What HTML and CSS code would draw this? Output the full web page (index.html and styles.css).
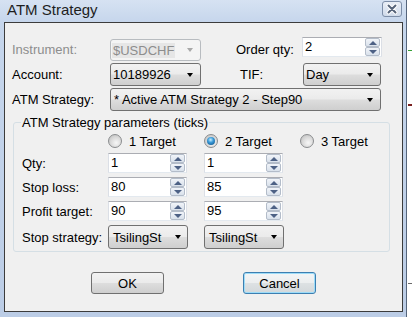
FILE: index.html
```html
<!DOCTYPE html>
<html lang="en">
<head>
    <meta charset="UTF-8">
    <meta name="viewport" content="width=device-width, initial-scale=1.0">
    <title>ATM Strategy</title>
    <link rel="stylesheet" href="styles.css">
</head>
<body>
    <div class="window">
        <div class="titlebar">
            <span class="title">ATM Strategy</span>
            <button class="close-btn" title="Close">
                <svg width="20" height="16" viewBox="0 0 20 16">
                    <path d="M6.5 4.5 L13.5 11.5 M13.5 4.5 L6.5 11.5" stroke="#ffffff" stroke-width="4" stroke-linecap="round"/>
                    <path d="M6.5 4.5 L13.5 11.5 M13.5 4.5 L6.5 11.5" stroke="#56647a" stroke-width="2" stroke-linecap="round"/>
                </svg>
            </button>
        </div>

        <div class="client">
            <div class="row row-first">
                <label class="label label-main is-disabled">Instrument:</label>
                <div class="combo combo-sm is-disabled">
                    <span class="combo-text">$USDCHF</span>
                    <span class="arrow"></span>
                </div>
                <label class="label label-qty">Order qty:</label>
                <div class="spin spin-order">
                    <span class="spin-value">2</span>
                    <span class="spin-btns"><span class="spin-up"></span><span class="spin-down"></span></span>
                </div>
            </div>

            <div class="row row-next">
                <label class="label label-main">Account:</label>
                <div class="combo combo-sm">
                    <span class="combo-text">10189926</span>
                    <span class="arrow"></span>
                </div>
                <label class="label label-tif">TIF:</label>
                <div class="combo combo-tif">
                    <span class="combo-text">Day</span>
                    <span class="arrow"></span>
                </div>
            </div>

            <div class="row row-next">
                <label class="label label-main">ATM Strategy:</label>
                <div class="combo combo-wide">
                    <span class="combo-text">* Active ATM Strategy 2 - Step90</span>
                    <span class="arrow"></span>
                </div>
            </div>

            <fieldset class="params">
                <legend>ATM Strategy parameters (ticks)</legend>
                <div class="params-grid">
                    <span></span>
                    <label class="radio"><span class="radio-dot"></span>1 Target</label>
                    <label class="radio"><span class="radio-dot is-checked"></span>2 Target</label>
                    <label class="radio"><span class="radio-dot"></span>3 Target</label>

                    <span class="label">Qty:</span>
                    <div class="spin"><span class="spin-value">1</span><span class="spin-btns"><span class="spin-up"></span><span class="spin-down"></span></span></div>
                    <div class="spin"><span class="spin-value">1</span><span class="spin-btns"><span class="spin-up"></span><span class="spin-down"></span></span></div>
                    <span></span>

                    <span class="label">Stop loss:</span>
                    <div class="spin"><span class="spin-value">80</span><span class="spin-btns"><span class="spin-up"></span><span class="spin-down"></span></span></div>
                    <div class="spin"><span class="spin-value">85</span><span class="spin-btns"><span class="spin-up"></span><span class="spin-down"></span></span></div>
                    <span></span>

                    <span class="label">Profit target:</span>
                    <div class="spin"><span class="spin-value">90</span><span class="spin-btns"><span class="spin-up"></span><span class="spin-down"></span></span></div>
                    <div class="spin"><span class="spin-value">95</span><span class="spin-btns"><span class="spin-up"></span><span class="spin-down"></span></span></div>
                    <span></span>

                    <span class="label">Stop strategy:</span>
                    <div class="combo combo-param"><span class="combo-text">TsilingSt</span><span class="arrow"></span></div>
                    <div class="combo combo-param"><span class="combo-text">TsilingSt</span><span class="arrow"></span></div>
                    <span></span>
                </div>
            </fieldset>

            <div class="actions">
                <button class="btn">OK</button>
                <button class="btn btn-default">Cancel</button>
            </div>
        </div>
    </div>
    <div class="backdrop"></div>
</body>
</html>
```

FILE: styles.css
```css
* {
    box-sizing: border-box;
}
body {
    margin: 0;
    width: 412px;
    height: 317px;
    overflow: hidden;
    display: flex;
    background: #ffffff;
    font-family: "Liberation Sans", Arial, sans-serif;
    font-size: 13px;
    color: #000;
}
.window {
    width: 407px;
    height: 317px;
    flex-shrink: 0;
    border-right: 1px solid #55657c;
    background: linear-gradient(#d6e2f2 0, #c6d6ec 22px, #bccde6 100%);
}
.titlebar {
    height: 22px;
    display: flex;
    justify-content: space-between;
    align-items: flex-start;
}
.title {
    padding: 1px 0 0 7px;
    font-size: 15px;
    line-height: 18px;
    color: #1e1e1e;
}
.close-btn {
    width: 20px;
    height: 16px;
    margin: 1px 4px 0 0;
    padding: 0;
    border: 1px solid #7d8ea8;
    border-radius: 3px;
    background: linear-gradient(#e9eef6, #d0dbeb);
    display: flex;
    align-items: center;
    justify-content: center;
}
.close-btn svg {
    display: block;
    margin: -1px;
}
.client {
    width: 399px;
    height: 290px;
    margin-left: 4px;
    padding-top: 14px;
    border: 1px solid #3c3c3c;
    background: #f0f0f0;
}
.row {
    display: flex;
    align-items: center;
    padding-left: 7px;
}
.row-first {
    height: 24px;
}
.row-next {
    height: 23px;
    margin-top: 2px;
}
.label {
    white-space: nowrap;
    line-height: 15px;
}
.label-main {
    width: 98px;
}
.label-qty {
    width: 66px;
    margin-left: 35px;
}
.label-tif {
    width: 63px;
    margin-left: 39px;
}
.is-disabled {
    color: #8d8d8d;
}

/* dropdown list */
.combo {
    height: 23px;
    display: flex;
    align-items: center;
    justify-content: space-between;
    padding: 0 7px 0 2px;
    border: 1px solid #707070;
    border-radius: 3px;
    background: linear-gradient(#f2f2f2 0%, #ebebeb 48%, #dddddd 52%, #cfcfcf 100%);
    white-space: nowrap;
}
.combo-text {
    line-height: 15px;
}
.arrow {
    width: 0;
    height: 0;
    border-top: 4px solid #000;
    border-left: 3px solid transparent;
    border-right: 3px solid transparent;
}
.combo-sm {
    width: 91px;
}
.row-first .combo {
    height: 22px;
    align-self: flex-end;
}
.combo.is-disabled {
    padding-left: 1px;
    border-color: #b8bcc0;
    background: #f4f4f4;
}
.combo.is-disabled .combo-text {
    padding: 0 1px;
    background: #e6e6e6;
}
.combo.is-disabled .arrow {
    border-top-color: #a8a8a8;
}
.combo-tif {
    width: 78px;
}
.combo-wide {
    width: 271px;
    padding-left: 3px;
}
.combo-param {
    width: 80px;
    height: 24px;
    padding-right: 6px;
    padding-left: 4px;
}

/* numeric up/down */
.spin {
    width: 79px;
    height: 20px;
    display: flex;
    border: 1px solid #dbdfe6;
    border-top-color: #abadb3;
    border-bottom-color: #e3e9ef;
    background: #fff;
}
.spin-order {
    width: 80px;
    height: 20px;
    align-self: flex-start;
}
.spin-value {
    flex: 1;
    padding-left: 2px;
    line-height: 17px;
}
.spin-btns {
    width: 15px;
    margin: 0 1px 0 0;
    display: flex;
    flex-direction: column;
}
.spin-up, .spin-down {
    flex: 1;
    display: flex;
    align-items: center;
    justify-content: center;
    border: 1px solid #b3bcc9;
    border-radius: 2px;
    background: linear-gradient(#f1f4f9, #d9e1eb);
}
.spin-up::after, .spin-down::after {
    content: "";
    width: 0;
    height: 0;
    border-left: 4px solid transparent;
    border-right: 4px solid transparent;
}
.spin-up::after {
    border-bottom: 4px solid #4d6185;
}
.spin-down::after {
    border-top: 4px solid #4d6185;
}

/* group box */
.params {
    width: 377px;
    min-width: 0;
    margin: 4px 0 0 8px;
    padding: 3px 0 2px 8px;
    border: 1px solid #d5dfe5;
    border-radius: 3px;
}
.params legend {
    margin-left: -1px;
    padding: 0 1px;
    line-height: 15px;
    color: #000;
}
.params-grid {
    display: grid;
    grid-template-columns: 86px 96px 96px 1fr;
    grid-template-rows: 16px 20px 20px 20px 24px;
    row-gap: 4px;
    align-items: center;
}
.radio {
    display: flex;
    align-items: center;
    white-space: nowrap;
    line-height: 15px;
}
.radio-dot {
    width: 14px;
    height: 14px;
    margin-right: 7px;
    border: 1px solid #8a8c8e;
    border-radius: 50%;
    background: radial-gradient(circle at 60% 65%, #f7f7f7 0, #dadada 50%, #b9b9b9 100%);
    display: flex;
    align-items: center;
    justify-content: center;
}
.radio-dot.is-checked::after {
    content: "";
    width: 8px;
    height: 8px;
    border-radius: 50%;
    background: radial-gradient(circle at 45% 35%, #c8efff 0, #3a9ad8 40%, #0b4a7e 100%);
}

/* buttons */
.actions {
    display: flex;
    gap: 79px;
    margin-top: 20px;
    padding-left: 86px;
}
.btn {
    width: 73px;
    height: 22px;
    padding: 0;
    border: 1px solid #707070;
    border-radius: 3px;
    background: linear-gradient(#f2f2f2 0%, #ebebeb 48%, #dddddd 52%, #cfcfcf 100%);
    font-family: "Liberation Sans", Arial, sans-serif;
    font-size: 13px;
    color: #000;
}
.btn-default {
    border-color: #3c7fb1;
    box-shadow: inset 0 0 0 1px #9ddcf8;
    background: linear-gradient(#f3f5f6 0%, #eceeef 48%, #dde1e3 52%, #d3d8db 100%);
}

.backdrop {
    flex: 1;
    background:
        linear-gradient(#35a035, #35a035) 1px 50px / 100% 1px no-repeat,
        linear-gradient(#7a2020, #7a2020) 1px 104px / 100% 2px no-repeat,
        linear-gradient(#6a6a6a, #6a6a6a) 1px 283px / 100% 1px no-repeat,
        #ffffff;
}
```
